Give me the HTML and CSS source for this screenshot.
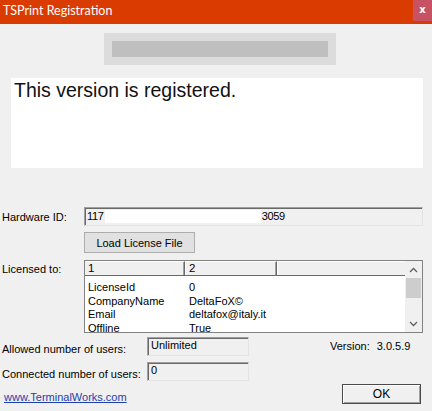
FILE: index.html
```html
<!DOCTYPE html>
<html>
<head>
<meta charset="utf-8">
<link rel="stylesheet" href="styles.css">
</head>
<body>
<div class="window">
  <div class="titlebar">
    <span class="title">TSPrint Registration</span>
    <span class="close">x</span>
  </div>
  <div class="banner"><div class="banner-inner"></div></div>
  <div class="message">This version is registered.</div>

  <div class="row hw-row">
    <span class="label">Hardware ID:</span>
    <div class="textbox hw-box"><span>117</span><span class="redact"></span><span>3059</span></div>
  </div>
  <div class="row btn-row">
    <button class="btn load-btn">Load License File</button>
  </div>
  <div class="row lic-row">
    <span class="label lic-label">Licensed to:</span>
    <div class="listview">
      <div class="lv-main">
        <div class="lv-header">
          <div class="lv-h c1">1</div>
          <div class="lv-h c2">2</div>
          <div class="lv-h c3"></div>
        </div>
        <div class="lv-body">
          <div class="lv-row"><span class="c1t">LicenseId</span><span>0</span></div>
          <div class="lv-row"><span class="c1t">CompanyName</span><span>DeltaFoX&#169;</span></div>
          <div class="lv-row"><span class="c1t">Email</span><span>deltafox@italy.it</span></div>
          <div class="lv-row"><span class="c1t">Offline</span><span>True</span></div>
        </div>
      </div>
      <div class="scrollbar">
        <div class="sb-btn"><svg width="9" height="6" viewBox="0 0 9 6"><polyline points="1,5 4.5,1.5 8,5" fill="none" stroke="#606060" stroke-width="1.3"/></svg></div>
        <div class="sb-thumb"></div>
        <div class="sb-track"></div>
        <div class="sb-btn"><svg width="9" height="6" viewBox="0 0 9 6"><polyline points="1,1 4.5,4.5 8,1" fill="none" stroke="#606060" stroke-width="1.3"/></svg></div>
      </div>
    </div>
  </div>

  <div class="users">
    <span class="label">Allowed number of users:</span>
    <div class="textbox small-box">Unlimited</div>
    <div class="version"><span>Version:</span><span>3.0.5.9</span></div>
    <span class="label">Connected number of users:</span>
    <div class="textbox small-box">0</div>
    <div></div>
  </div>

  <div class="footer">
    <a class="link" href="#">www.TerminalWorks.com</a>
    <button class="btn ok-btn">OK</button>
  </div>
</div>
</body>
</html>
```

FILE: styles.css
```css
* { box-sizing: border-box; }
html, body {
  margin: 0;
  padding: 0;
  background: #f0f0f0;
}
body {
  width: 432px;
  height: 411px;
  overflow: hidden;
  font-family: "Liberation Sans", Arial, sans-serif;
  font-size: 11px;
  color: #000;
}
.window {
  display: flex;
  flex-direction: column;
}
.titlebar {
  height: 24px;
  background: #da3b01;
  display: flex;
  align-items: flex-start;
  color: #fff;
}
.title {
  font-family: Lato, "Open Sans", sans-serif;
  font-size: 12.5px;
  line-height: 22px;
  padding-left: 3px;
}
.close {
  margin-left: auto;
  width: 19px;
  height: 21px;
  background: #c75263;
  color: #fff;
  font-family: "DejaVu Sans", sans-serif;
  font-weight: bold;
  font-size: 10px;
  line-height: 20px;
  text-align: center;
}
.banner {
  margin: 9px 0 0 104px;
  width: 232px;
  height: 32px;
  background: #dcdcdc;
  padding: 8px;
}
.banner-inner {
  height: 16px;
  background: #bfbfbf;
}
.message {
  margin: 13px 0 0 11px;
  width: 412px;
  height: 90px;
  background: #fff;
  font-size: 19.5px;
  line-height: 22px;
  padding: 1px 0 0 3px;
  color: #111;
}
.row {
  display: flex;
  align-items: center;
  padding-left: 2px;
}
.label {
  white-space: nowrap;
}
.hw-row {
  margin-top: 39px;
}
.hw-row .label {
  width: 82px;
}
.textbox {
  height: 19px;
  background: #f0f0f0;
  border-top: 1px solid #a0a0a0;
  border-left: 1px solid #a0a0a0;
  border-right: 1px solid #e3e3e3;
  border-bottom: 1px solid #e3e3e3;
  box-shadow: inset 1px 1px 0 #696969;
  padding: 2px 0 0 3px;
  line-height: 13px;
  white-space: nowrap;
  overflow: hidden;
}
.hw-box {
  width: 339px;
  display: flex;
  padding-left: 2px;
  letter-spacing: -0.3px;
}
.redact {
  display: inline-block;
  width: 156px;
  height: 13px;
  background: #fff;
  margin: 0 1px 0 1px;
}
.btn-row {
  margin-top: 6px;
  padding-left: 84px;
}
.btn {
  font-family: "Liberation Sans", Arial, sans-serif;
  font-size: 11px;
  color: #000;
  padding: 0;
  margin: 0;
}
.load-btn {
  width: 111px;
  height: 21px;
  background: #e1e1e1;
  border: 1px solid #adadad;
}
.lic-row {
  margin-top: 7px;
  align-items: flex-start;
}
.lic-label {
  width: 82px;
  padding-top: 3px;
}
.listview {
  width: 339px;
  height: 73px;
  border: 1px solid #828282;
  background: #fff;
  display: flex;
  overflow: hidden;
}
.lv-main {
  flex: 1;
  display: flex;
  flex-direction: column;
  overflow: hidden;
}
.lv-header {
  display: flex;
  height: 15px;
  flex: none;
  background: #f0f0f0;
  border-bottom: 1px solid #696969;
}
.lv-h {
  height: 14px;
  line-height: 13px;
  padding-left: 3px;
  border-left: 1px solid #fff;
  border-top: 1px solid #fff;
  border-right: 1px solid #696969;
  box-shadow: inset -1px 0 0 #a0a0a0;
  font-size: 11.5px;
}
.lv-h.c1 { width: 100px; border-left: none; }
.lv-h.c2 { width: 92px; }
.lv-h.c3 { flex: 1; border-right: none; box-shadow: none; }
.lv-body {
  padding-top: 5px;
}
.lv-row {
  display: flex;
  height: 13.5px;
  line-height: 13px;
  padding-left: 3px;
  white-space: nowrap;
}
.c1t {
  width: 101px;
}
.scrollbar {
  width: 17px;
  flex: none;
  background: #f0f0f0;
  display: flex;
  flex-direction: column;
}
.sb-btn {
  height: 17px;
  display: flex;
  align-items: center;
  justify-content: center;
}
.sb-thumb {
  height: 20px;
  margin: 0 1px;
  background: #cdcdcd;
}
.sb-track {
  flex: 1;
}
.users {
  margin-top: 4px;
  display: grid;
  grid-template-columns: 145px 102px 1fr;
  grid-template-rows: 19px 19px;
  row-gap: 6px;
  align-items: center;
  padding-left: 2px;
}
.small-box {
  width: 102px;
  padding-top: 1px;
}
.users .label {
  padding-top: 4px;
}
.version {
  display: flex;
  gap: 7px;
  padding-left: 81px;
  align-self: start;
  padding-top: 3px;
}
.footer {
  display: flex;
  align-items: center;
  justify-content: space-between;
  margin-top: 3px;
  padding: 0 11px 0 4px;
}
.link {
  color: #1f3fae;
  text-decoration: underline;
  margin-top: 6px;
}
.ok-btn {
  width: 79px;
  height: 20px;
  background: #f0f0f0;
  border: 1px solid #4a4a4a;
  box-shadow: inset 1px 1px 0 #fff, inset -1px -1px 0 #a0a0a0;
  font-size: 12px;
}
```
